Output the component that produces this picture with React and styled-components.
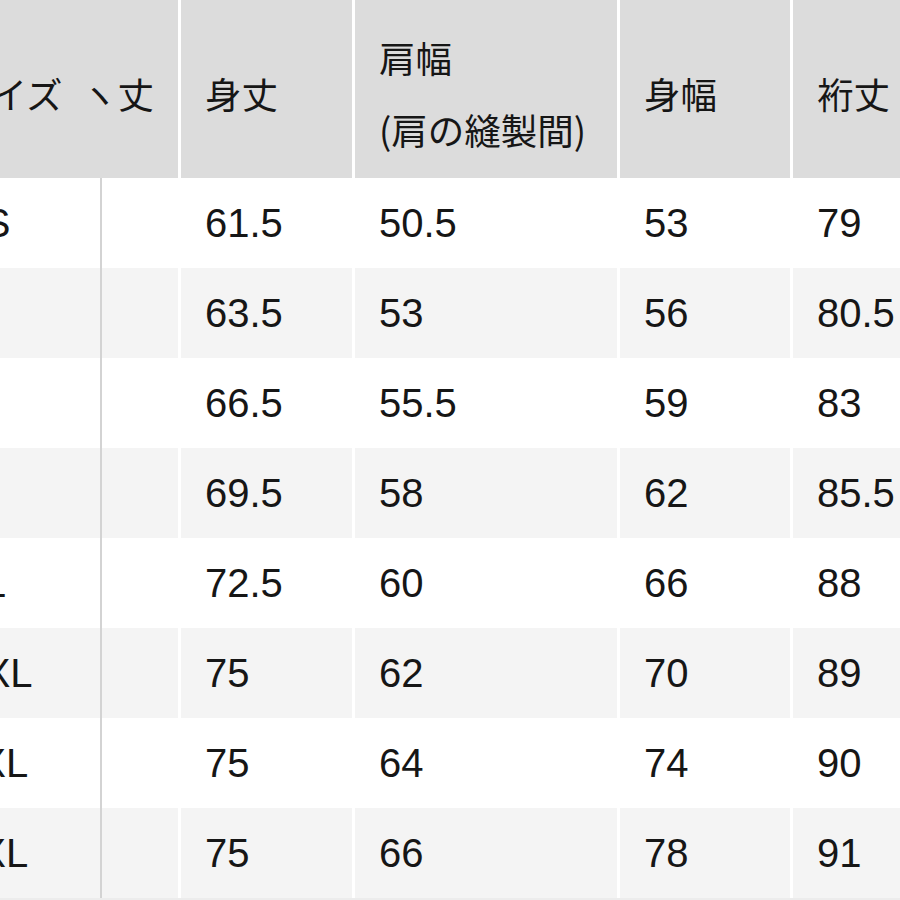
import React from 'react'
import styled, { createGlobalStyle } from 'styled-components'

const GlobalStyle = createGlobalStyle`
    html, body {
        margin: 0;
        padding: 0;
        background: #ffffff;
        overflow: hidden;
    }
    body {
        font-family: "Liberation Sans", "Noto Sans CJK JP", sans-serif;
        color: #161616;
    }
`

const COLS = '162px 79px 174px 265px 173px 220px'

const Frame = styled.div`
    width: 900px;
    height: 900px;
    overflow: hidden;
`

const Table = styled.div`
    display: grid;
    grid-template-columns: ${COLS};
    grid-template-rows: 178px repeat(8, 90px);
    margin-left: -60px;
    width: max-content;
    border-bottom: 2px solid #ececec;
`

const HeadCell = styled.div`
    box-sizing: border-box;
    display: flex;
    align-items: center;
    justify-content: ${p => (p.$split ? 'space-between' : 'flex-start')};
    padding: 10px ${p => (p.$split ? '24px' : '0px')} 0px ${p => (p.$split ? '14px' : '24px')};
    grid-column: span ${p => p.$span || 1};
    background: #dcdcdc;
    border-right: 3px solid #ffffff;
    font-family: "Noto Sans CJK JP", sans-serif;
    font-size: 36.5px;
    line-height: 72px;
    white-space: nowrap;
`

const HeadText = styled.span`
    display: block;
`

const Cell = styled.div`
    box-sizing: border-box;
    display: flex;
    align-items: center;
    padding-left: ${p => (p.$size ? '17px' : '24px')};
    background: ${p => (p.$shade ? '#f4f4f4' : '#ffffff')};
    border-right: ${p => (p.$size ? '2px solid #d3d3d3' : '3px solid #ffffff')};
    font-size: 40px;
    white-space: nowrap;
`

const rows = [
    ['XS', '', '61.5', '50.5', '53', '79'],
    ['S', '', '63.5', '53', '56', '80.5'],
    ['M', '', '66.5', '55.5', '59', '83'],
    ['L', '', '69.5', '58', '62', '85.5'],
    ['XL', '', '72.5', '60', '66', '88'],
    ['XXL', '', '75', '62', '70', '89'],
    ['3XL', '', '75', '64', '74', '90'],
    ['4XL', '', '75', '66', '78', '91'],
]

export default function App() {
    return (
        <>
            <GlobalStyle />
            <Frame>
                <Table>
                    <HeadCell $span={2} $split>
                        <HeadText>サイズ</HeadText>
                        <HeadText>ヽ丈</HeadText>
                    </HeadCell>
                    <HeadCell><HeadText>身丈</HeadText></HeadCell>
                    <HeadCell>
                        <div>
                            <HeadText>肩幅</HeadText>
                            <HeadText>(肩の縫製間)</HeadText>
                        </div>
                    </HeadCell>
                    <HeadCell><HeadText>身幅</HeadText></HeadCell>
                    <HeadCell><HeadText>裄丈</HeadText></HeadCell>
                    {rows.map((r, i) =>
                        r.map((v, j) => (
                            <Cell key={i + '-' + j} $shade={i % 2 === 1} $size={j === 0}>
                                {v}
                            </Cell>
                        ))
                    )}
                </Table>
            </Frame>
        </>
    )
}
